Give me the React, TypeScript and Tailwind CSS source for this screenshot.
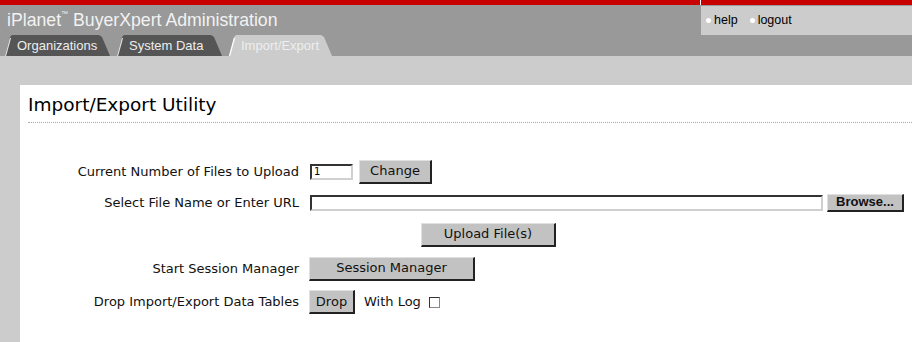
import React from "react";

function Tab({ label, width, active }: { label: string; width: number; active?: boolean }) {
  const fill = active ? "#cccccc" : "#555555";
  const w = width;
  return (
    <div className="relative h-[21px] flex items-center" style={{ width: w }}>
      <svg className="absolute inset-0" width={w} height={21} viewBox={`0 0 ${w} 21`}>
        <polygon points={`1,21 6,2 8,0 ${w - 13},0 ${w - 10},2 ${w - 2},21`} fill={fill} />
        <line x1={1.5} y1={21} x2={6.5} y2={3} stroke={active ? "#ffffff" : "#dddddd"} strokeWidth={1.2} />
      </svg>
      <span className="relative pl-[13px] text-[13px] leading-none text-[#eeeeee] font-['Liberation_Sans',Arial,sans-serif]">
        {label}
      </span>
    </div>
  );
}

function Btn({ children, className = "" }: { children: React.ReactNode; className?: string }) {
  return (
    <div
      className={
        "flex items-center justify-center bg-[#c2c2c2] border-t border-l border-t-[#e0e0e0] border-l-[#e0e0e0] border-b-2 border-r-2 border-b-[#222] border-r-[#222] text-[13px] text-[#111] " +
        className
      }
    >
      {children}
    </div>
  );
}

function Input({ className = "", value = "" }: { className?: string; value?: string }) {
  return (
    <div className={"bg-white border-2 border-t-[#333] border-l-[#333] border-b-[#d0d0d0] border-r-[#d0d0d0] h-[16px] flex items-center pl-[2px] text-[10px] leading-none text-black " + className}>
      {value}
    </div>
  );
}

export default function App() {
  return (
    <div className="w-[912px] h-[342px] overflow-hidden bg-[#cccccc] font-['DejaVu_Sans',Verdana,sans-serif]">
      {/* header */}
      <div className="h-[5px] bg-[#c80000] relative">
        <div className="absolute left-[700px] top-0 w-px h-[5px] bg-white" />
      </div>
      <div className="h-[51px] bg-[#999999] flex justify-between">
        <div className="flex flex-col">
          <div className="h-[30px] pl-[7px] pt-[4px] text-[17.7px] leading-[22px] text-[#f2f2f2] font-['Liberation_Sans',Arial,sans-serif]">
            iPlanet<sup className="text-[7px] align-super">™</sup> BuyerXpert Administration
          </div>
          <div className="flex pl-[4px] gap-[4px]">
            <Tab label="Organizations" width={108} />
            <Tab label="System Data" width={108} />
            <Tab label="Import/Export" width={106} active />
          </div>
        </div>
        <div className="w-[211px] h-[29px] mt-[1px] bg-[#cccccc] flex items-center pl-[5px] gap-[12px] text-[12.5px] text-black font-['Liberation_Sans',Arial,sans-serif]">
          <span className="flex items-center gap-[3px]">
            <span className="w-[5px] h-[5px] rounded-full bg-white" />
            help
          </span>
          <span className="flex items-center gap-[3px]">
            <span className="w-[5px] h-[5px] rounded-full bg-white" />
            logout
          </span>
        </div>
      </div>
      <div className="h-[29px] bg-[#cccccc]" />
      {/* panel */}
      <div className="ml-[20px] bg-white h-[257px] pl-[8px]">
        <div className="pt-[9px] h-[38px] text-[18.5px] leading-[22px] text-black border-b border-dotted border-[#aaaaaa]">
          Import/Export Utility
        </div>
        <div className="mt-[33px] text-[13px] text-[#111]">
          {/* row 1 */}
          <div className="flex items-center h-[31px]">
            <div className="w-[271px] text-right">Current Number of Files to Upload</div>
            <div className="flex items-center ml-[11px] gap-[6px]">
              <Input className="w-[43px]" value="1" />
              <Btn className="w-[73px] h-[24px]">Change</Btn>
            </div>
          </div>
          {/* row 2 */}
          <div className="flex items-center h-[31px]">
            <div className="w-[271px] text-right">Select File Name or Enter URL</div>
            <div className="flex items-center ml-[11px] gap-[4px]">
              <Input className="w-[513px]" />
              <Btn className="w-[77px] h-[18px] font-bold font-['Liberation_Sans',Arial,sans-serif]">Browse...</Btn>
            </div>
          </div>
          {/* row 3 */}
          <div className="flex items-center h-[33px] pl-[393px]">
            <Btn className="w-[135px] h-[24px]">Upload File(s)</Btn>
          </div>
          {/* row 4 */}
          <div className="flex items-center h-[35px]">
            <div className="w-[271px] text-right">Start Session Manager</div>
            <div className="ml-[10px]">
              <Btn className="w-[166px] h-[24px]">Session Manager</Btn>
            </div>
          </div>
          {/* row 5 */}
          <div className="flex items-center h-[32px]">
            <div className="w-[271px] text-right">Drop Import/Export Data Tables</div>
            <div className="ml-[10px] flex items-center">
              <Btn className="w-[46px] h-[24px]">Drop</Btn>
              <span className="ml-[9px]">With Log</span>
              <span className="ml-[8px] w-[11px] h-[11px] bg-white border border-t-[#333] border-l-[#333] border-b-[#888] border-r-[#888]" />
            </div>
          </div>
        </div>
      </div>
    </div>
  );
}
